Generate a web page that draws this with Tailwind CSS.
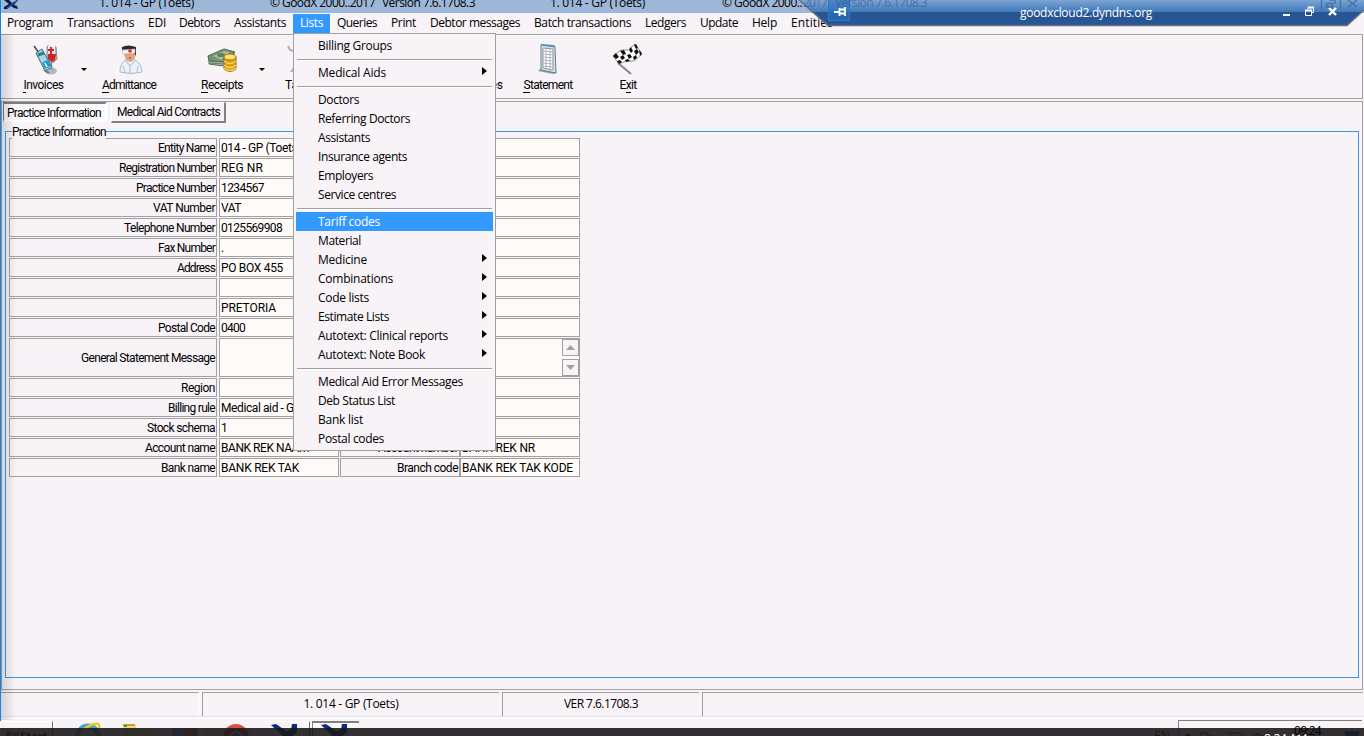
<!DOCTYPE html>
<html lang="en">
<head>
  <meta charset="UTF-8" />
  <meta name="viewport" content="width=device-width, initial-scale=1.0" />
  <title>GoodX</title>
  <script src="https://cdn.jsdelivr.net/npm/@tailwindcss/browser@4"></script>
</head>
<body class="bg-[#f7f3f7]">
<div class="relative w-[1364px] h-[736px] overflow-hidden bg-[#f7f3f7] text-black text-[12px] font-['Open_Sans',sans-serif] flex flex-col whitespace-nowrap">

  <!-- title bar -->
  <div class="relative h-[13px] shrink-0 bg-[#9db7d8] overflow-hidden">
    <svg class="absolute left-[4px] top-0" width="17" height="9" viewBox="0 0 17 9">
      <path d="M0 0 5 0 8 3 13 0 14 0 10 5 13 6 14 9 10 8 7 6 3 9 0 9 0 7 5 4Z" fill="#0b1a35" />
      <path d="M3 8 13 1" stroke="#2554c8" stroke-width="1.4" />
    </svg>
    <span class="fit absolute left-[99px] -top-[6px] leading-[18px]" data-w="95">1. 014 - GP (Toets)</span>
    <span class="fit absolute left-[270px] -top-[6px] leading-[18px]" data-w="105">© GoodX 2000..2017</span>
    <span class="fit absolute left-[382px] -top-[6px] leading-[18px]" data-w="93">Version 7.6.1708.3</span>
    <span class="fit absolute left-[550px] -top-[6px] leading-[18px]" data-w="95">1. 014 - GP (Toets)</span>
    <span class="fit absolute left-[722px] -top-[6px] leading-[18px]" data-w="80">© GoodX 2000..</span>
  </div>

  <!-- menu bar -->
  <nav class="flex h-[21px] shrink-0 leading-[20px]">
    <div class="w-[60px] pl-[7px]"><span class="fit" data-w="46">Program</span></div>
    <div class="w-[81px] pl-[7px]"><span class="fit" data-w="67">Transactions</span></div>
    <div class="w-[31px] pl-[7px]"><span class="fit" data-w="18">EDI</span></div>
    <div class="w-[55px] pl-[7px]"><span class="fit" data-w="41">Debtors</span></div>
    <div class="w-[66px] pl-[7px]"><span class="fit" data-w="52">Assistants</span></div>
    <div class="w-[37px] pl-[7px] h-[19px] mt-px leading-[18px] bg-[#3399ff] text-white"><span class="fit" data-w="23">Lists</span></div>
    <div class="w-[54px] pl-[7px]"><span class="fit" data-w="40">Queries</span></div>
    <div class="w-[39px] pl-[7px]"><span class="fit" data-w="25">Print</span></div>
    <div class="w-[104px] pl-[7px]"><span class="fit" data-w="90">Debtor messages</span></div>
    <div class="w-[111px] pl-[7px]"><span class="fit" data-w="97">Batch transactions</span></div>
    <div class="w-[55px] pl-[7px]"><span class="fit" data-w="41">Ledgers</span></div>
    <div class="w-[52px] pl-[7px]"><span class="fit" data-w="38">Update</span></div>
    <div class="w-[39px] pl-[7px]"><span class="fit" data-w="25">Help</span></div>
    <div class="w-[60px] pl-[7px]"><span class="fit" data-w="42">Entities</span></div>
  </nav>

  <!-- toolbar -->
  <div class="relative flex h-[65px] shrink-0 mr-[1px] border-t border-r border-b border-[#a0a0a0] text-[12px] font-['Roboto',sans-serif] shadow-[inset_0_1px_0_#fff]">
    <div class="w-[87px] pt-[8px] flex flex-col items-center">
      <svg class="ml-[4px]" width="26" height="33" viewBox="0 0 26 33">
        <path d="M14 3 23 4 24 16 20 20 14 17Z" fill="#b8b9bd" stroke="#888b91" />
        <path d="M15 11 23 11 22 17 19 19 15 16Z" fill="#cf2222" />
        <path d="M15 3H22V11H15Z" fill="#f3eeee" />
        <path d="M15 7 21 7M18 4 18 11" stroke="#e3202a" stroke-width="2" />
        <ellipse cx="18" cy="28" rx="6" ry="3.5" fill="#b4b9c0" />
        <path d="M18 18 19 27" stroke="#7d858e" />
        <path d="M1 3 6 10" stroke="#39505e" stroke-width="1.5" />
        <path d="M3 10 9 6 19 24 12 28Z" fill="#a9d3df" stroke="#3c6a7c" />
        <path d="M5 12 11 10" stroke="#1d8393" stroke-width="3" />
        <path d="M9 20 14 17 18 23 12 26Z" fill="#1f9ad0" />
        <path d="M11 27 16 30" stroke="#65747e" stroke-width="2" />
        <path d="M12 20 14 24" stroke="#fff" stroke-width="1.5" />
      </svg>
      <span class="fit leading-[18px]" data-w="40"><span class="border-b border-black">I</span>nvoices</span>
    </div>
    <div class="w-[0px]"><svg class="relative -left-[6px] top-[33px] overflow-visible" width="6" height="3"><path d="M0 0H6L3 3Z" /></svg></div>
    <div class="w-[84px] pt-[8px] flex flex-col items-center">
      <svg class="ml-[4px]" width="26" height="33" viewBox="0 0 26 33">
        <path d="M2 29C2 21 6 16 12 16S24 21 24 29Q13 32 2 29Z" fill="#eef2f8" stroke="#a9b6c6" />
        <path d="M8 18 12 23 17 18M12 23V30M5 23 7 29M20 23 19 29" fill="none" stroke="#bccad9" stroke-width="1.3" />
        <path d="M6 7Q6 18 12 19 18 18 18 7Z" fill="#dda584" />
        <path d="M4 4Q10 1 18 4L18 8V13L16 9 4 8Z" fill="#2d2829" />
        <path d="M4 7 17 6V10L5 11Z" fill="#f4f4f4" stroke="#b7b7bb" stroke-width=".6" />
        <path d="M12 6V10M10 8H14M12 14V16" stroke="#e22727" stroke-width="1.3" />
      </svg>
      <span class="fit leading-[18px]" data-w="54"><span class="border-b border-black">A</span>dmittance</span>
    </div>
    <div class="w-[102px] pt-[8px] flex flex-col items-center">
      <svg class="ml-[2px]" width="32" height="33" viewBox="0 0 32 33">
        <path d="M1 13 17 6 28 9 16 19 2 18Z" fill="#739475" stroke="#49674d" />
        <path d="M2 18 16 19 27 10V16L16 23 2 21Z" fill="#a8bdab" stroke="#526e55" />
        <path d="M3 20 16 21 26 14" fill="none" stroke="#45614a" stroke-width=".7" />
        <path d="M6 13 17 8 23 9 14 17Z" fill="#a2bca0" /><ellipse cx="14" cy="12" rx="4" ry="2" fill="#62815f" />
        <path d="M17 14V26Q23 31 29 26V14Z" fill="#d79b1a" stroke="#966914" />
        <ellipse cx="23" cy="14" rx="6" ry="3" fill="#ffe268" stroke="#b27b12" />
        <path d="M17 18Q23 23 29 18M17 22Q23 27 29 22M17 25Q23 30 29 25" fill="none" stroke="#fbd155" stroke-width="1.5" />
      </svg>
      <span class="fit leading-[18px]" data-w="42"><span class="border-b border-black">R</span>eceipts</span>
    </div>
    <div class="w-[0px]"><svg class="relative -left-[14px] top-[33px] overflow-visible" width="6" height="3"><path d="M0 0H6L3 3Z" /></svg></div>
    <div class="w-[230px] pt-[8px] relative">
      <svg class="ml-[14px]" width="8" height="33" viewBox="0 0 8 33"><path d="M1 3 3 7 7 8M7 25 4 29" fill="none" stroke="#a6b3bf" stroke-width="2" /></svg>
      <div class="flex justify-between leading-[18px] pl-[12px]"><span>Ta</span><span>es</span></div>
    </div>
    <div class="w-[90px] pt-[8px] flex flex-col items-center">
      <svg width="20" height="33" viewBox="0 0 20 33">
        <path d="M0 28 4 24 19 30 15 31Z" fill="#989da2" />
        <path d="M3 2 17 4 18 30 3 27Z" fill="#d5e0e7" stroke="#657f92" />
        <path d="M3 1.5 17 3" stroke="#5b96b8" stroke-width="1.5" />
        <path d="M5 5 15 6 15 27 5 25Z" fill="#fff" stroke="#8c989f" />
        <path d="M5 8 15 9M5 11 15 12M5 14 15 15M5 17 15 18M5 20 15 21M5 23 15 24M8 5V25M12 6V26" stroke="#9ba6ac" stroke-width=".8" />
      </svg>
      <span class="fit leading-[18px]" data-w="49"><span class="border-b border-black">S</span>tatement</span>
    </div>
    <div class="w-[70px] pt-[8px] flex flex-col items-center">
      <svg width="32" height="33" viewBox="0 0 32 33">
        <path d="M6 20 19 31" stroke="#85858b" stroke-width="2" />
        <path d="M1 13 9 7 16 7 23 1 30 11 22 18 14 18 7 21Z" fill="#fff" stroke="#6a6a6e" stroke-width=".7" />
        <path d="M1 13 4 10 7 14 4 16ZM8 8 12 7 14 11 11 12ZM17 7 19 4 21 8 19 10ZM22 2 24 1 26 5 24 6ZM8 14 11 12 13 15 10 17ZM15 12 18 11 20 14 17 16ZM22 8 25 6 27 9 24 12ZM5 18 8 17 10 19 7 21ZM13 17 16 16 18 18 14 19ZM21 14 24 12 25 15 22 17ZM27 7 29 9 30 11 28 13Z" fill="#101012" />
      </svg>
      <span class="fit leading-[18px]" data-w="17">E<span class="border-b border-black">x</span>it</span>
    </div>
  </div>

  <!-- client area -->
  <div class="h-[589px] shrink-0 mt-[2px] mr-[1px] border-t border-r border-b border-[#a0a0a0] pl-[3px] pr-[4px] flex flex-col text-[12px] font-['Roboto',sans-serif]">
    <div class="flex h-[21px] gap-[4px] shrink-0">
      <div class="w-[104px] h-[20px] border-t-2 border-l border-[#808080] border-r-2 border-r-white border-b-2 border-b-white bg-[#faf8fb] pl-[3px] leading-[19px]"><span class="fit" data-w="94">Practice Information</span></div>
      <div class="w-[115px] h-[21px] border-r-2 border-b-2 border-[#808080] border-l border-l-white border-t border-t-white pl-[5px] leading-[19px]"><span class="fit" data-w="103">Medical Aid Contracts</span></div>
    </div>
    <div class="relative mt-[8px] ml-[2px] w-[1354px] h-[547px] shrink-0 border border-[#3d95ee] pl-[3px] pt-[6px]">
      <span class="absolute left-[6px] -top-[8px] h-[15px] leading-[17px] bg-[#f7f3f7]"><span class="fit" data-w="94">Practice Information</span></span>
      <div id="form" class="flex flex-col gap-px w-[571px] leading-[19px]"></div>
    </div>
  </div>

  <!-- status bar -->
  <div class="flex gap-[3px] h-[25px] mt-[2px] pl-[1px] shrink-0 border-b border-[#e4e4ea]">
    <div class="w-[198px] border-t border-[#a0a0a0] border-r border-r-white"></div>
    <div class="w-[297px] border-t border-l border-[#a0a0a0] text-center leading-[21px]"><span class="fit" data-w="95">1. 014 - GP (Toets)</span></div>
    <div class="w-[197px] border-t border-l border-[#a0a0a0] text-center leading-[21px]"><span class="fit" data-w="74">VER 7.6.1708.3</span></div>
    <div class="w-[661px] border-t border-l border-[#a0a0a0]"></div>
  </div>

  <!-- remote taskbar -->
  <div class="relative h-[20px] shrink-0 border-t-2 border-[#fafaff]">
    <div class="absolute left-[3px] top-[2px] w-[50px] h-[17px] border-t border-t-white border-r border-[#707070] pl-[17px] leading-[29px] font-bold"><span class="fit" data-w="27">Start</span></div>
    <svg class="absolute left-[6px] top-[11px]" width="13" height="8"><path d="M0 2Q4 0 6 2L5 8H0Z" fill="#d53d20" /><path d="M7 2Q10 4 13 1V8H7Z" fill="#55a332" /></svg>
    <svg class="absolute left-[73px] top-[3px]" width="30" height="16"><path d="M4 16Q6 4 15 4T26 16" fill="none" stroke="#43a6cf" stroke-width="5" /><path d="M4 14Q17 0 25 2 28 4 24 9" fill="none" stroke="#f2c51b" stroke-width="2.5" /></svg>
    <svg class="absolute left-[121px] top-[3px]" width="32" height="16"><path d="M2 3H15V6H31V16H2Z" fill="#eed986" /><path d="M2 3H14" stroke="#cda034" stroke-width="2" /><path d="M3 4H6" stroke="#28a54a" stroke-width="2" /></svg>
    <svg class="absolute left-[171px] top-[7px]" width="28" height="13"><path d="M1 2H27V13H1Z" fill="#66a9d3" /><circle cx="19" cy="9" r="6" fill="#de7043" /></svg>
    <div class="absolute left-[204px] top-[9px] w-[48px] h-[9px] bg-[#ddd]"></div>
    <svg class="absolute left-[223px] top-[5px]" width="26" height="13"><circle cx="13" cy="13" r="13" fill="#dd4d41" /><circle cx="13" cy="14" r="6" fill="#4286db" stroke="#fff" stroke-width="2" /></svg>
    <div class="absolute left-[263px] top-[2px] w-[47px] h-[17px] border-t border-t-white border-r border-[#707070]"></div>
    <div class="absolute left-[312px] top-[2px] w-[47px] h-[17px] border-t-2 border-l border-[#808080] bg-white/60"></div>
    <svg class="absolute left-[271px] top-[5px]" width="28" height="13"><path d="M0 1 5 0 15 7 20 6 21 0H26V8L20 13H13Z" fill="#082c85" /></svg>
    <svg class="absolute left-[321px] top-[5px]" width="28" height="13"><path d="M0 1 5 0 15 7 20 6 21 0H26V8L20 13H13Z" fill="#082c85" /></svg>
    <span class="absolute left-[1154px] top-[9px] leading-[15px]">EN</span>
    <div class="absolute left-[1178px] top-[1px] w-[184px] h-[18px] border-t border-l border-[#808080]"></div>
    <svg class="absolute left-[1183px] top-[13px]" width="82" height="7"><path d="M0 6 5 1 10 6Z" /><path d="M18 7V1H25V4H32V7M43 1H59V7M49 1V7M71 4 76 1V7M79 3 81 6" fill="none" stroke="#222" /></svg>
    <div class="absolute left-[1345px] top-[12px] w-[14px] h-[8px] bg-[#2345ad]"></div>
  </div>

  <!-- window edge shading -->
  <div class="absolute left-0 top-[34px] w-[16px] h-[686px] bg-linear-to-r from-black/15 to-transparent"></div>
  <div class="absolute left-0 top-0 w-px h-[721px] bg-[#1583e2]"></div>
  <div class="absolute left-px top-[102px] w-px h-[587px] bg-[#8c8c94]"></div>

  <!-- Lists menu -->
  <div class="absolute left-[293px] top-[33px] w-[203px] h-[418px] bg-[#f7f3f7] border border-[#a0a0a0] px-[2px] pt-[2px]">
    <div id="menu" class="flex flex-col"></div>
  </div>

  <!-- connection bar -->
  <div class="absolute left-[799px] top-0 w-[565px] h-[27px]">
    <svg class="absolute left-0 top-0" width="565" height="27">
      <defs>
        <linearGradient id="bar" x1="0" y1="0" x2="0" y2="1">
          <stop offset="0" stop-color="#7ba4d3" /><stop offset=".46" stop-color="#4079ba" />
          <stop offset=".48" stop-color="#275591" /><stop offset="1" stop-color="#285698" />
        </linearGradient>
      </defs>
      <path d="M0 0H565V10L548 26H165L29 26Z" fill="url(#bar)" />
      <path d="M0 0 29 25.5H548L565 10" fill="none" stroke="#66717f" stroke-width="1.5" />
      <rect x="29.5" y="-1" width="21" height="21.5" fill="#2b73bd" fill-opacity=".6" stroke="#2d77c5" />
      <path d="M35 12H40M40.5 8V16M41 9.5H46M41 13.5H46M46 7V16" stroke="#fff" stroke-width="1.8" fill="none" />
      <path d="M484 15H491" stroke="#fff" stroke-width="2" />
      <path d="M506.5 10.5H512.5V15.5H506.5ZM509 9V7.5H514.5V12.5H513" fill="none" stroke="#fff" />
      <path d="M506 10.5H513M509 7.5H515" stroke="#fff" stroke-width="2" />
      <path d="M530 8 537 15M537 8 530 15" stroke="#fff" stroke-width="2.4" />
      <path d="M522.5 0V9M541.5 0V9M527.5 3.5H533.5V7H527.5ZM530 0H536V4M549 0 558 7M558 0 549 7" stroke="#315b8c" stroke-opacity=".6" stroke-width="1.5" fill="none" />
    </svg>
    <span class="fit absolute left-[4px] -top-[6px] leading-[18px] text-[#31537d]/60" data-w="24">2017</span>
    <span class="fit absolute left-[36px] -top-[6px] leading-[18px] text-[#31537d]/60" data-w="92">Version 7.6.1708.3</span>
    <span class="fit absolute left-[221px] top-[4px] leading-[18px] text-white" data-w="132">goodxcloud2.dyndns.org</span>
  </div>

  <!-- local taskbar edge -->
  <div class="absolute left-0 top-[728px] w-full h-[8px] bg-[#1b191c]/90 overflow-hidden">
    <span class="absolute left-[1264px] top-[3px] leading-[16px] text-white"><span class="fit" data-w="43">8:24 AM</span></span>
  </div>
  <span class="absolute left-[1294px] top-[723px] leading-[15px]"><span class="fit" data-w="27">09:24</span></span>
</div>

<script>
  // label, value, label width, value width
  const rows = [
    ['Entity Name', '014 - GP (Toets)', 57, 80],
    ['Registration Number', 'REG NR', 96, 42],
    ['Practice Number', '1234567', 79, 43],
    ['VAT Number', 'VAT', 62, 20],
    ['Telephone Number', '0125569908', 91, 61],
    ['Fax Number', '.', 57, 3],
    ['Address', 'PO BOX 455', 38, 62],
    ['', '', 0, 0],
    ['', 'PRETORIA', 0, 55],
    ['Postal Code', '0400', 57, 24],
    ['General Statement Message', '', 134, 0],
    ['Region', '', 34, 0],
    ['Billing rule', 'Medical aid - GP', 47, 80],
    ['Stock schema', '1', 68, 5],
    ['Account name', 'BANK REK NAAM', 70, 88, 'Account number', 'BANK REK NR', 80, 73],
    ['Bank name', 'BANK REK TAK', 54, 78, 'Branch code', 'BANK REK TAK KODE', 61, 111],
  ];
  const text = (t, w) => (t ? `<span class="fit" data-w="${w}">${t}</span>` : '');
  const label = (t, w) => `<div class="w-full border border-[#a0a0a0] flex items-center justify-end pt-px pr-px">${text(t, w)}</div>`;
  document.getElementById('form').innerHTML = rows.map((r) => {
    const tall = r[0].startsWith('General');
    const left = `<div class="w-[208px] mr-[2px] flex">${label(r[0], r[2])}</div>`;
    let right;
    if (r.length > 4) {
      right = `<div class="w-[120px] border border-[#a0a0a0] bg-[#fefbf8] pl-[1px]">${text(r[1], r[3])}</div>
        <div class="w-[120px] ml-[1px] flex">${label(r[4], r[6])}</div>
        <div class="w-[120px] border border-[#a0a0a0] bg-[#fefbf8] pl-[1px]">${text(r[5], r[7])}</div>`;
    } else if (tall) {
      right = `<div class="w-[361px] border border-[#a0a0a0] bg-[#fefbf8] flex flex-col items-end justify-between">
        <div class="w-[17px] h-[17px] border border-[#a0a0a0] bg-[#f7f3f7] flex items-center justify-center"><svg width="9" height="5"><path d="M0 5H9L4.5 0Z" fill="#a0a0a0"/></svg></div>
        <div class="w-[17px] h-[17px] border border-[#a0a0a0] bg-[#f7f3f7] flex items-center justify-center"><svg width="9" height="5"><path d="M0 0H9L4.5 5Z" fill="#a0a0a0"/></svg></div>
      </div>`;
    } else {
      right = `<div class="w-[361px] border border-[#a0a0a0] bg-[#fefbf8] pl-[1px]">${text(r[1], r[3])}</div>`;
    }
    return `<div class="flex ${tall ? 'h-[39px]' : 'h-[19px]'}">${left}${right}</div>`;
  }).join('');

  // null is a separator, the third entry marks a submenu
  const items = [
    ['Billing Groups', 74], null,
    ['Medical Aids', 68, true], null,
    ['Doctors', 41], ['Referring Doctors', 92], ['Assistants', 52], ['Insurance agents', 89],
    ['Employers', 55], ['Service centres', 78], null,
    ['Tariff codes', 62], ['Material', 43], ['Medicine', 49, true], ['Combinations', 75, true],
    ['Code lists', 51, true], ['Estimate Lists', 71, true],
    ['Autotext: Clinical reports', 130, true], ['Autotext: Note Book', 107, true], null,
    ['Medical Aid Error Messages', 145], ['Deb Status List', 77], ['Bank list', 45], ['Postal codes', 66],
  ];
  document.getElementById('menu').innerHTML = items.map((i) => {
    if (!i) return '<div class="h-[8px] pt-[4px] px-[1px]"><div class="h-[2px] bg-[#a0a0a0] border-b border-white"></div></div>';
    const active = i[0] === 'Tariff codes' ? 'bg-[#3399ff] text-white' : '';
    const arrow = i[2] ? '<svg class="mt-[4px]" width="5" height="8" viewBox="0 0 5 8"><path d="M0 0 5 4 0 8Z" /></svg>' : '';
    return `<div class="flex items-start justify-between h-[19px] pl-[22px] pr-[6px] leading-[19px] ${active}"><span class="fit" data-w="${i[1]}">${i[0]}</span>${arrow}</div>`;
  }).join('');

  // spread the letters so that each caption takes its set width
  function fitText() {
    document.querySelectorAll('.fit[data-w]').forEach((el) => {
      el.style.display = 'inline-block';
      el.style.letterSpacing = '0px';
      const gap = (Number(el.dataset.w) - el.getBoundingClientRect().width) / el.textContent.length;
      el.style.letterSpacing = gap.toFixed(3) + 'px';
    });
  }
  fitText();
  window.addEventListener('load', fitText);
  document.fonts.ready.then(fitText);
  setTimeout(fitText, 100);
</script>
</body>
</html>
